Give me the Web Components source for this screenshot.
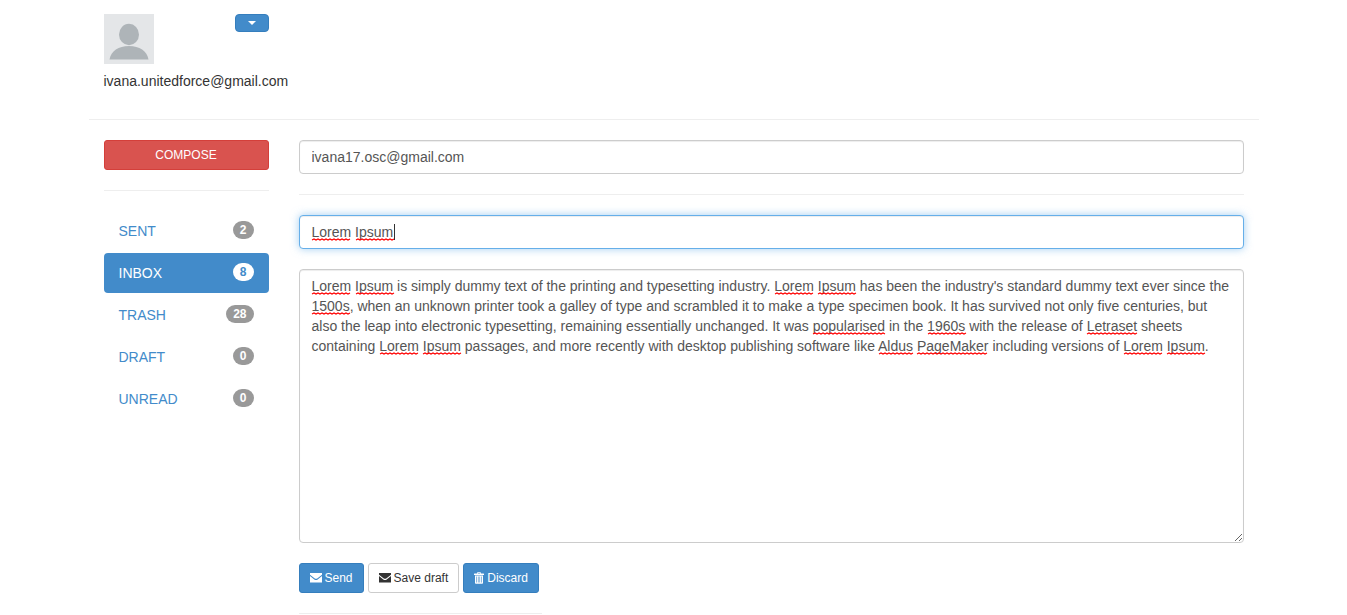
<!DOCTYPE html>
<html lang="en">
<head>
<meta charset="utf-8">
<title>Compose mail</title>
<style>
body { margin: 0; background: #fff; color: #333; font: 14px/20px "Liberation Sans", Arial, sans-serif; }
</style>
</head>
<body>
<mail-app>
  <mail-account slot="account" email="ivana.unitedforce@gmail.com"></mail-account>
  <mail-button slot="side" kind="danger">COMPOSE</mail-button>
  <mail-rule slot="side"></mail-rule>
  <mail-folders slot="side">
    <mail-folder count="2">SENT</mail-folder>
    <mail-folder count="8" active>INBOX</mail-folder>
    <mail-folder count="28">TRASH</mail-folder>
    <mail-folder count="0">DRAFT</mail-folder>
    <mail-folder count="0">UNREAD</mail-folder>
  </mail-folders>
  <mail-field slot="main" label="To" value="ivana17.osc@gmail.com"></mail-field>
  <mail-rule slot="main"></mail-rule>
  <mail-field slot="main" label="Subject" value="Lorem Ipsum" misspelt="Lorem Ipsum" active></mail-field>
  <mail-field slot="main" label="Message" multiline misspelt="Lorem Ipsum 1500s popularised 1960s Letraset Aldus PageMaker" value="Lorem Ipsum is simply dummy text of the printing and typesetting industry. Lorem Ipsum has been the industry's standard dummy text ever since the 1500s, when an unknown printer took a galley of type and scrambled it to make a type specimen book. It has survived not only five centuries, but also the leap into electronic typesetting, remaining essentially unchanged. It was popularised in the 1960s with the release of Letraset sheets containing Lorem Ipsum passages, and more recently with desktop publishing software like Aldus PageMaker including versions of Lorem Ipsum."></mail-field>
  <mail-actions slot="main">
    <mail-button kind="primary" icon="envelope">Send</mail-button>
    <mail-button kind="default" icon="envelope">Save draft</mail-button>
    <mail-button kind="primary" icon="trash">Discard</mail-button>
  </mail-actions>
  <mail-rule slot="main" short></mail-rule>
</mail-app>

<script>
class Base extends HTMLElement {
  render(html) {
    if (!this.shadowRoot) this.attachShadow({ mode: 'open' });
    this.shadowRoot.innerHTML = '<style>*{box-sizing:border-box}:host{display:block;box-sizing:border-box}</style>' + html;
  }
}

customElements.define('mail-app', class extends Base {
  connectedCallback() {
    this.render(`<style>
      :host { max-width: 1170px; margin: 0 auto; padding-top: 14px; }
      header { padding: 0 15px 28px; border-bottom: 1px solid #eee; }
      .body { display: grid; grid-template-columns: 1fr 5fr; padding-top: 20px; }
      aside, main { display: flex; flex-direction: column; gap: 20px; padding: 0 15px; min-width: 0; }
    </style>
    <header><slot name="account"></slot></header>
    <div class="body"><aside><slot name="side"></slot></aside><main><slot name="main"></slot></main></div>`);
  }
});

customElements.define('mail-account', class extends Base {
  connectedCallback() {
    this.render(`<style>
      .top { display: flex; justify-content: space-between; align-items: flex-start; width: calc((100% + 30px) / 6 - 29px); min-width: 100px; }
      svg { display: block; }
      button { display: flex; align-items: center; justify-content: center; width: 34px; height: 18px; padding: 0; border: 1px solid #357ebd; border-radius: 4px; background: #428bca; }
      p { margin: 7px 0 0; white-space: nowrap; }
    </style>
    <div class="top">
      <svg width="50" height="50" viewBox="0 0 50 50" role="img" aria-label="Profile picture">
        <path fill="#e4e6e8" d="M0 0h50v50H0z"/>
        <ellipse cx="25" cy="20.5" rx="10" ry="10.7" fill="#aeb4b8"/>
        <path fill="#aeb4b8" d="M5.500 45.500C7 37 14.500 32 25 32s18 5 19.500 13.500z"/>
      </svg>
      <button aria-label="Account menu"><svg width="8" height="4" viewBox="0 0 8 4"><path fill="#fff" d="M0 0h8L4 4z"/></svg></button>
    </div>
    <p>${this.getAttribute('email')}</p>`);
  }
});

customElements.define('mail-rule', class extends Base {
  connectedCallback() {
    this.render(`<style>
      hr { margin: 0; border: 0; height: 1px; background: #eee; }
      :host([short]) { width: calc((100% + 30px) / 4); }
    </style><hr>`);
  }
});

const icons = {
  envelope: '<svg width="12" height="12" viewBox="0 0 12 12"><path fill="currentColor" d="M0 1h12v1.700L7.200 6.400Q6 7.200 4.800 6.400L0 2.700zM0 4.100l4.300 3.300Q6 8.600 7.700 7.400L12 4.100V10.500H0z"/></svg>',
  trash: '<svg width="10" height="12" viewBox="1 0 10 12"><path fill="currentColor" fill-rule="evenodd" d="M4 1.500V1q0-.8.800-.8h2.400Q8 .2 8 1v.5h2.500q.5 0 .5.5v1H1V2q0-.5.5-.5zm.8 0h2.400V1H4.800zM2 3.500h8V11q0 .8-.8.800H2.800Q2 11.800 2 11zm1.300 1v6h.6v-6zm1.600 0v6h.6v-6zm1.600 0v6h.6v-6zm1.600 0v6h.6v-6z"/></svg>'
};

customElements.define('mail-button', class extends Base {
  connectedCallback() {
    this.render(`<style>
      button { display: flex; align-items: center; justify-content: center; gap: 3px; width: 100%; height: 30px; padding: 0 10px; border: 1px solid #357ebd; border-radius: 3px; background: #428bca; color: #fff; font: inherit; font-size: 12px; line-height: 18px; white-space: nowrap; cursor: pointer; }
      :host([kind=danger]) button { background: #d9534f; border-color: #d43f3a; }
      :host([kind=default]) button { background: #fff; border-color: #ccc; color: #333; }
      svg { display: block; flex: none; }
    </style><button>${icons[this.getAttribute('icon')] || ''}<span><slot></slot></span></button>`);
  }
});

customElements.define('mail-actions', class extends Base {
  connectedCallback() {
    this.render(`<style>:host { display: flex; gap: 4px; }</style><slot></slot>`);
  }
});

customElements.define('mail-folders', class extends Base {
  connectedCallback() {
    this.render(`<style>nav { display: flex; flex-direction: column; gap: 2px; }</style><nav aria-label="Folders"><slot></slot></nav>`);
  }
});

customElements.define('mail-folder', class extends Base {
  connectedCallback() {
    this.render(`<style>
      a { display: flex; justify-content: space-between; align-items: flex-start; padding: 10px 15px; border-radius: 4px; color: #428bca; text-decoration: none; }
      b { padding: 3px 7px; border-radius: 10px; background: #999; color: #fff; font-size: 12px; line-height: 12px; }
      :host([active]) a { background: #428bca; color: #fff; }
      :host([active]) b { background: #fff; color: #428bca; }
    </style><a href="#"><slot></slot><b>${this.getAttribute('count')}</b></a>`);
  }
});

/* Text field that marks misspelt words with a red squiggle over the control. */
customElements.define('mail-field', class extends Base {
  connectedCallback() {
    const multi = this.hasAttribute('multiline');
    const tag = multi ? 'textarea' : 'input';
    this.render(`<style>
      :host { position: relative; }
      label { display: block; }
      .control { display: block; width: 100%; margin: 0; padding: 6px 12px; border: 1px solid #ccc; border-radius: 4px; outline: 0; background: #fff; color: #555; font: inherit; line-height: 20px; box-shadow: inset 0 1px 1px rgba(0,0,0,.075); }
      input.control { height: 34px; }
      textarea.control { height: 274px; resize: vertical; overflow: auto; }
      :host([active]) .control { border-color: #66afe9; box-shadow: inset 0 1px 1px rgba(0,0,0,.075), 0 0 8px rgba(102,175,233,.6); caret-color: transparent; }
      .marks { position: absolute; inset: 0; width: 100%; height: 100%; pointer-events: none; }
      .mirror { position: absolute; inset: 0; padding: 7px 13px; visibility: hidden; white-space: pre-wrap; }
    </style>
    <label><${tag} class="control" spellcheck="false" aria-label="${this.getAttribute('label')}"></${tag}></label>
    <svg class="marks" aria-hidden="true"></svg>`);
    this.control = this.shadowRoot.querySelector('.control');
    this.control.value = this.getAttribute('value');
    this.control.addEventListener('input', () => this.mark());
    new ResizeObserver(() => this.mark()).observe(this);
    this.mark();
  }
  mark() {
    const mirror = document.createElement('div');
    mirror.className = 'mirror';
    mirror.textContent = this.control.value;
    this.shadowRoot.append(mirror);
    const text = mirror.firstChild;
    const origin = this.getBoundingClientRect();
    const words = (this.getAttribute('misspelt') || '').split(' ').filter(Boolean);
    let out = '';
    if (text && words.length) {
      const range = document.createRange();
      for (const m of text.data.matchAll(new RegExp('\\b(' + words.join('|') + ')\\b', 'g'))) {
        range.setStart(text, m.index);
        range.setEnd(text, m.index + m[0].length);
        const r = range.getBoundingClientRect();
        const x = Math.round(r.left - origin.left), y = Math.round(r.bottom - origin.top);
        let zigzag = '';
        for (let i = 0; i < Math.floor(r.width / 2); i++) zigzag += i % 2 ? 'l2 1' : 'l2 -1';
        out += `<path d="M${x} ${y}${zigzag}" fill="none" stroke="#f00" stroke-width="1.2"/>`;
      }
    }
    if (text && this.hasAttribute('active')) {
      const range = document.createRange();
      range.selectNodeContents(text);
      const r = range.getBoundingClientRect();
      out += `<rect x="${Math.round(r.right - origin.left)}" y="${Math.round(r.top - origin.top)}" width="1" height="16" fill="#333" shape-rendering="crispEdges"/>`;
    }
    mirror.remove();
    this.shadowRoot.querySelector('.marks').innerHTML = out;
  }
});
</script>
</body>
</html>
